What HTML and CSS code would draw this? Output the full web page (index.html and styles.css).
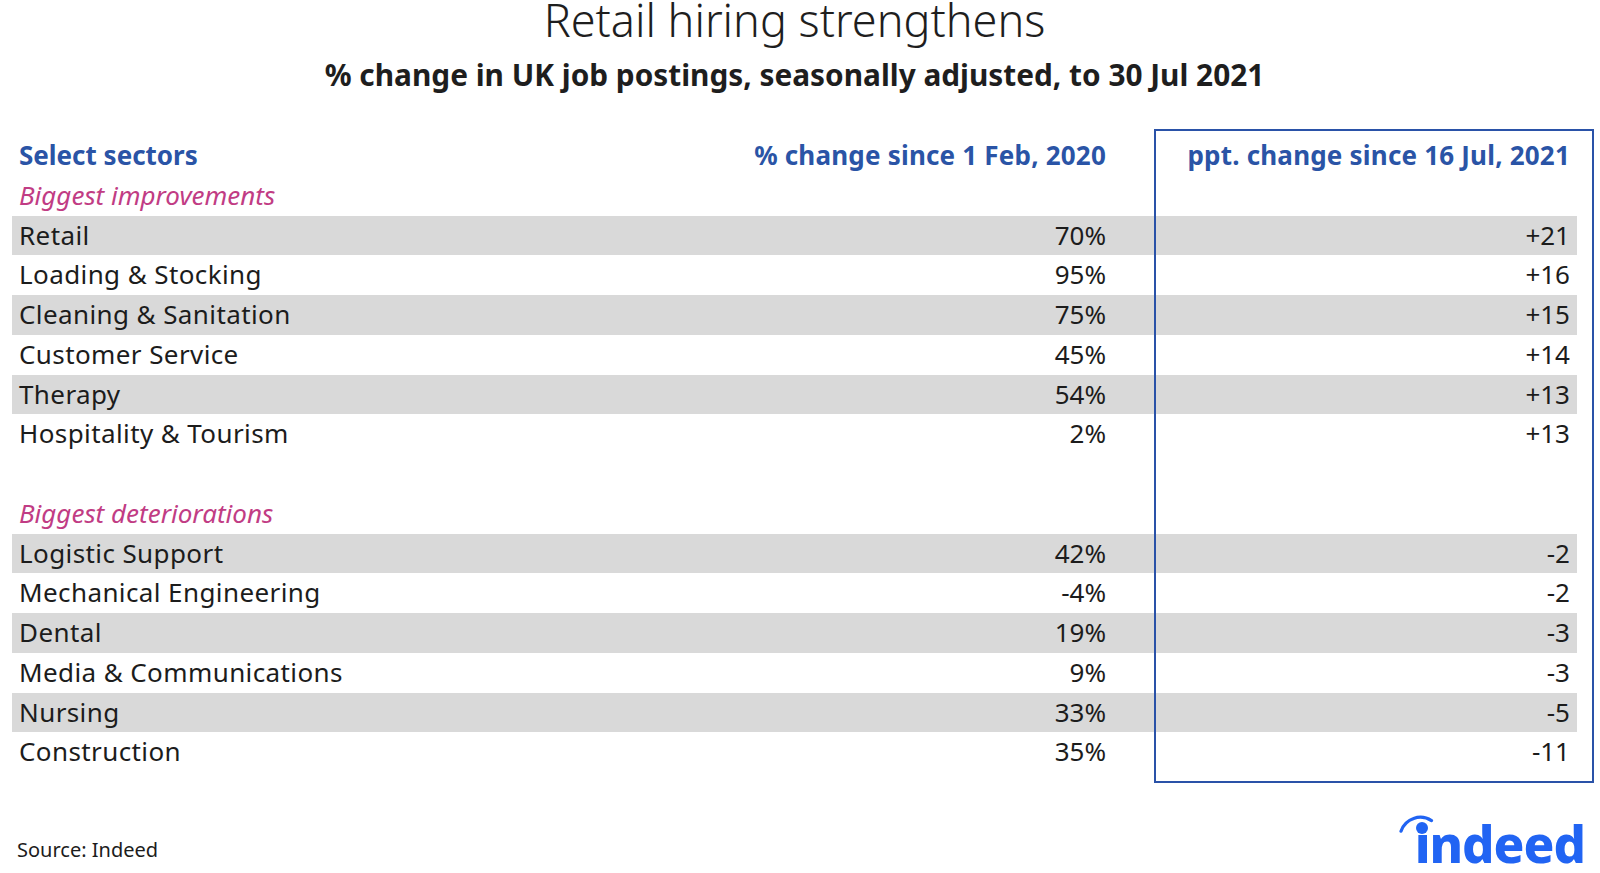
FILE: index.html
```html
<!DOCTYPE html>
<html lang="en">
<head>
<meta charset="utf-8">
<title>Retail hiring strengthens</title>
<link rel="stylesheet" href="styles.css">
</head>
<body>
<div class="page">
  <header class="titles">
    <h1 class="title">Retail hiring strengthens</h1>
    <h2 class="subtitle">% change in UK job postings, seasonally adjusted, to 30 Jul 2021</h2>
  </header>

  <section class="table">
    <div class="main">
      <div class="row head"><span class="name">Select sectors</span><span class="val">% change since 1 Feb, 2020</span></div>
      <div class="row sub"><span class="name">Biggest improvements</span></div>
      <div class="row grey"><span class="name">Retail</span><span class="val">70%</span></div>
      <div class="row"><span class="name">Loading &amp; Stocking</span><span class="val">95%</span></div>
      <div class="row grey"><span class="name">Cleaning &amp; Sanitation</span><span class="val">75%</span></div>
      <div class="row"><span class="name">Customer Service</span><span class="val">45%</span></div>
      <div class="row grey"><span class="name">Therapy</span><span class="val">54%</span></div>
      <div class="row"><span class="name">Hospitality &amp; Tourism</span><span class="val">2%</span></div>
      <div class="row"></div>
      <div class="row sub"><span class="name">Biggest deteriorations</span></div>
      <div class="row grey"><span class="name">Logistic Support</span><span class="val">42%</span></div>
      <div class="row"><span class="name">Mechanical Engineering</span><span class="val">-4%</span></div>
      <div class="row grey"><span class="name">Dental</span><span class="val">19%</span></div>
      <div class="row"><span class="name">Media &amp; Communications</span><span class="val">9%</span></div>
      <div class="row grey"><span class="name">Nursing</span><span class="val">33%</span></div>
      <div class="row"><span class="name">Construction</span><span class="val">35%</span></div>
    </div>
    <div class="recent">
      <div class="row head"><span class="val">ppt. change since 16 Jul, 2021</span></div>
      <div class="row"></div>
      <div class="row grey"><span class="val">+21</span></div>
      <div class="row"><span class="val">+16</span></div>
      <div class="row grey"><span class="val">+15</span></div>
      <div class="row"><span class="val">+14</span></div>
      <div class="row grey"><span class="val">+13</span></div>
      <div class="row"><span class="val">+13</span></div>
      <div class="row"></div>
      <div class="row"></div>
      <div class="row grey"><span class="val">-2</span></div>
      <div class="row"><span class="val">-2</span></div>
      <div class="row grey"><span class="val">-3</span></div>
      <div class="row"><span class="val">-3</span></div>
      <div class="row grey"><span class="val">-5</span></div>
      <div class="row"><span class="val">-11</span></div>
    </div>
  </section>

  <footer class="footer">
    <span class="source">Source: Indeed</span>
    <span class="logo"><span class="logo-i">ı<svg class="logo-mark" width="44" height="30" viewBox="0 0 44 30" aria-hidden="true">
        <path d="M3 17.2 A20.5 20.5 0 0 1 33.5 6.6" fill="none" stroke="#2164f3" stroke-width="3.2" stroke-linecap="round"/>
        <circle cx="24" cy="14" r="6" fill="#2164f3"/>
      </svg></span>ndeed</span>
  </footer>
</div>
</body>
</html>
```

FILE: styles.css
```css
* { box-sizing: border-box; }

html, body {
  margin: 0;
  padding: 0;
  background: #ffffff;
}

body {
  font-family: "Noto Sans", "Open Sans", "DejaVu Sans", sans-serif;
  color: #1c1c1c;
  width: 1600px;
  height: 873px;
  overflow: hidden;
}

.page {
  display: flex;
  flex-direction: column;
  height: 873px;
}

.titles {
  display: flex;
  flex-direction: column;
  align-items: center;
  padding-right: 11px;
}

.title {
  margin: 0;
  font-size: 45px;
  line-height: 40px;
  font-weight: 300;
  color: #1e1e1e;
}

.subtitle {
  margin: 16px 0 0 0;
  font-size: 29.8px;
  line-height: 38px;
  font-weight: 700;
  color: #1e1e1e;
}

.table {
  display: flex;
  align-items: flex-start;
  margin-top: 35px;
  padding-left: 12px;
}

.main {
  width: 1142px;
  padding-top: 7px;
}

.recent {
  width: 440px;
  border: 2px solid #2a52a8;
  padding: 5px 15px 9px 0;
}

.row {
  display: flex;
  justify-content: space-between;
  align-items: center;
  height: 39.75px;
  font-size: 26px;
  line-height: 39.75px;
  white-space: nowrap;
}

.main .row {
  padding: 0 48px 0 7px;
}

.main .name {
  letter-spacing: 0.4px;
}

.recent .row {
  justify-content: flex-end;
  padding: 0 7px 0 0;
}

.grey {
  background: #d9d9d9;
}

.head {
  font-weight: 700;
  color: #2a54a6;
  letter-spacing: 0.2px;
}

.main .head .name {
  letter-spacing: 0;
}

.sub {
  font-style: italic;
  color: #c13c84;
}

.main .sub .name {
  letter-spacing: 0;
}

.footer {
  flex: 1;
  display: flex;
  justify-content: space-between;
  align-items: flex-end;
  padding: 0 15px 0 17px;
}

.source {
  font-size: 20px;
  line-height: 24px;
  margin-bottom: 11px;
  color: #1c1c1c;
}

.logo {
  display: block;
  margin-bottom: 2px;
  font-size: 51px;
  line-height: 56px;
  font-weight: 800;
  color: #2164f3;
  letter-spacing: -1px;
}

.logo-i {
  position: relative;
  display: inline-block;
}

.logo-mark {
  position: absolute;
  left: calc(50% - 24px);
  top: -1px;
}
```
